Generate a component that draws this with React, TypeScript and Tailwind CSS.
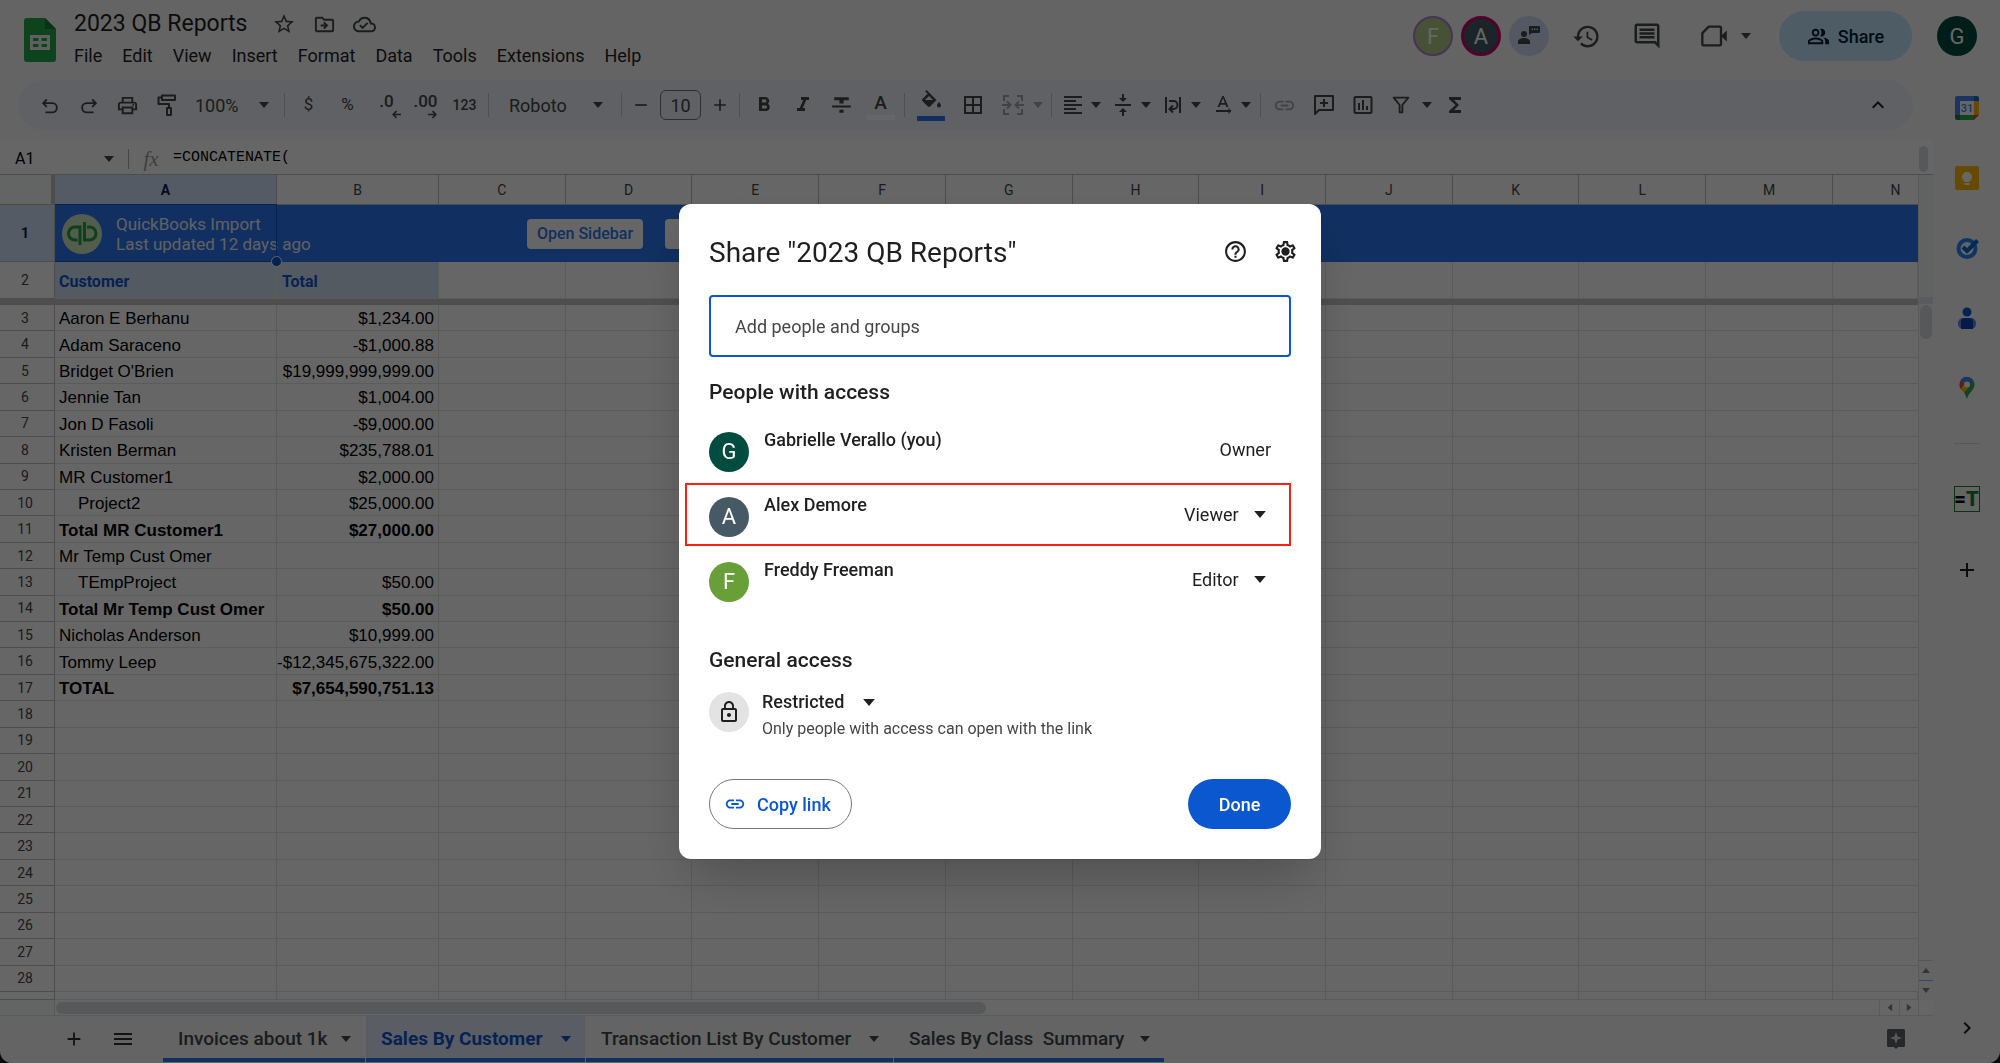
import React from "react";
import {
  MdOutlineStarBorder,
  MdOutlineDriveFileMove,
  MdOutlineCloudDone,
  MdOutlinePrint,
  MdFormatBold,
  MdFormatItalic,
  MdFormatStrikethrough,
  MdBorderAll,
  MdFormatAlignLeft,
  MdVerticalAlignCenter,
  MdTextRotationNone,
  MdInsertLink,
  MdInsertChartOutlined,
  MdFunctions,
  MdKeyboardArrowUp,
  MdKeyboardArrowRight,
  MdHistory,
  MdOutlineComment,
  MdOutlinePeopleAlt,
  MdHelpOutline,
  MdOutlineSettings,
  MdLockOutline,
  MdAdd,
  MdRemove,
  MdMenu,
} from "react-icons/md";

const menus = ["File", "Edit", "View", "Insert", "Format", "Data", "Tools", "Extensions", "Help"];
const letters = ["A", "B", "C", "D", "E", "F", "G", "H", "I", "J", "K", "L", "M", "N"];

type Row = { a: string; b: string; bold?: boolean; indent?: boolean };
const data: Row[] = [
  { a: "Aaron E Berhanu", b: "$1,234.00" },
  { a: "Adam Saraceno", b: "-$1,000.88" },
  { a: "Bridget O'Brien", b: "$19,999,999,999.00" },
  { a: "Jennie Tan", b: "$1,004.00" },
  { a: "Jon D Fasoli", b: "-$9,000.00" },
  { a: "Kristen Berman", b: "$235,788.01" },
  { a: "MR Customer1", b: "$2,000.00" },
  { a: "Project2", b: "$25,000.00", indent: true },
  { a: "Total MR Customer1", b: "$27,000.00", bold: true },
  { a: "Mr Temp Cust Omer", b: "" },
  { a: "TEmpProject", b: "$50.00", indent: true },
  { a: "Total Mr Temp Cust Omer", b: "$50.00", bold: true },
  { a: "Nicholas Anderson", b: "$10,999.00" },
  { a: "Tommy Leep", b: "-$12,345,675,322.00" },
  { a: "TOTAL", b: "$7,654,590,751.13", bold: true },
];
const bodyRows: Row[] = Array.from({ length: 26 }, (_, i) => data[i] ?? { a: "\u00a0", b: "" });

function Caret({ className = "", size = "h-[6px] w-[10px]" }: { className?: string; size?: string }) {
  return (
    <svg viewBox="0 0 10 6" className={"shrink-0 " + size + " " + className} fill="currentColor" aria-hidden="true">
      <path d="M0 0h10L5 6z" />
    </svg>
  );
}

function Stroke({ children, className = "size-6", width = 2 }: { children: React.ReactNode; className?: string; width?: number }) {
  return (
    <svg viewBox="0 0 24 24" className={className} fill="none" stroke="currentColor" strokeWidth={width} aria-hidden="true">
      {children}
    </svg>
  );
}

function Tool({ label, children, className = "w-[39px]" }: { label: string; children: React.ReactNode; className?: string }) {
  return (
    <button aria-label={label} className={"flex h-9 shrink-0 items-center justify-center " + className}>
      {children}
    </button>
  );
}

function Divider() {
  return <span className="mx-1 h-6 w-px shrink-0 bg-[#c7c7c7]" />;
}

function SheetsLogo() {
  return (
    <svg viewBox="0 0 32 44" className="h-11 w-8" aria-label="Sheets">
      <path d="M3 0h18l11 11v30a3 3 0 0 1-3 3H3a3 3 0 0 1-3-3V3a3 3 0 0 1 3-3z" fill="#22a94a" />
      <path d="M21 0l11 11H21z" fill="#13803a" />
      <path d="M6 17h20v15H6zM9 20v3h5.500v-3zM17.500 20v3H23v-3zM9 26v3h5.500v-3zM17.500 26v3H23v-3z" fill="#f1f1f1" fillRule="evenodd" />
    </svg>
  );
}

function Header() {
  return (
    <header className="flex h-20 shrink-0 justify-between pl-6 pr-[23px]">
      <div className="flex">
        <div className="pt-[18px]">
          <SheetsLogo />
        </div>
        <div className="pl-[18px] pt-2">
          <div className="flex h-8 items-center">
            <h1 className="whitespace-nowrap text-[23px] leading-8 text-[#1f1f1f]">2023 QB Reports</h1>
            <div className="flex gap-[17px] pl-[25px] text-[#444746]">
              <button aria-label="Star"><MdOutlineStarBorder className="size-6" /></button>
              <button aria-label="Move"><MdOutlineDriveFileMove className="size-[23px]" /></button>
              <button aria-label="Saved to Drive"><MdOutlineCloudDone className="size-[23px]" /></button>
            </div>
          </div>
          <nav className="flex h-[30px] items-center gap-5 text-[18px] text-[#1f1f1f]">
            {menus.map((m) => (
              <button key={m}>{m}</button>
            ))}
          </nav>
        </div>
      </div>
      <div className="flex h-[72px] items-center text-[#444746]">
        <span className="flex size-10 items-center justify-center rounded-full border-2 border-[#b77ee0] bg-[#aecb84] text-[22px] text-white">F</span>
        <span className="ml-2 flex size-10 items-center justify-center rounded-full border-3 border-[#d5006d] bg-[#455a64] text-[22px] text-white">A</span>
        <button aria-label="Show chat" className="ml-2 flex size-10 items-center justify-center rounded-full bg-[#d3dcf5]">
          <svg viewBox="0 0 24 24" className="size-6" fill="#444746" aria-hidden="true">
            <circle cx="7" cy="10" r="3" />
            <path d="M1 20v-2c0-3 3-4 6-4s6 1 6 4v2zM12 3a1 1 0 0 1 1-1h9a1 1 0 0 1 1 1v5a1 1 0 0 1-1 1h-7l-3 2z" />
            <path d="M14.500 4.500h1.500V6h-1.500zM17 4.500h1.500V6H17zM19.500 4.500H21V6h-1.500z" fill="#d3dcf5" />
          </svg>
        </button>
        <button aria-label="Version history" className="ml-[23px]"><MdHistory className="size-[29px]" /></button>
        <button aria-label="Comments" className="ml-[31px]"><MdOutlineComment className="size-[30px]" /></button>
        <button aria-label="Meet" className="ml-[38px] flex items-center gap-[13px]">
          <Stroke className="size-7" width={2}>
            <path d="M7.500 4H17a1 1 0 0 1 1 1v14a1 1 0 0 1-1 1H3a1 1 0 0 1-1-1V9.500z" strokeLinejoin="round" />
            <path d="M18 12l5-5v10z" fill="currentColor" stroke="none" />
          </Stroke>
          <Caret />
        </button>
        <button className="ml-7 flex h-[50px] w-[133px] items-center justify-center gap-2 rounded-full bg-[#c2e7ff] text-[18px] font-medium text-[#001d35]">
          <MdOutlinePeopleAlt className="size-[23px]" />
          Share
        </button>
        <span className="ml-[25px] flex size-10 items-center justify-center rounded-full bg-[#004d40] text-[22px] text-white">G</span>
      </div>
    </header>
  );
}

function Toolbar() {
  return (
    <div className="ml-[18px] mr-[20px] flex h-[50px] shrink-0 items-center rounded-full bg-[#edf2fa] pl-3 pr-4 text-[#444746]">
      <Tool label="Undo">
        <Stroke className="size-[22px]"><path d="M7 20h7.500a5 5 0 0 0 0-10H4.500M8.500 6l-4 4 4 4" /></Stroke>
      </Tool>
      <Tool label="Redo">
        <Stroke className="size-[22px]"><path d="M17 20H9.500a5 5 0 0 1 0-10h10M15.500 6l4 4-4 4" /></Stroke>
      </Tool>
      <Tool label="Print"><MdOutlinePrint className="size-[23px]" /></Tool>
      <Tool label="Paint format">
        <Stroke className="size-6"><path d="M7 2.500h13v4.500H7zM7 4.500H3.500V11H14v4M12 15h4v7h-4z" strokeLinejoin="round" /></Stroke>
      </Tool>
      <div className="relative flex h-9 w-[94px] shrink-0 items-center pl-[9px]">
        <select aria-label="Zoom" className="appearance-none bg-transparent pr-8 text-[18px]"><option>100%</option></select>
        <Caret className="pointer-events-none absolute right-[11px]" />
      </div>
      <Divider />
      <Tool label="Currency"><span className="text-[17px]">$</span></Tool>
      <Tool label="Percent"><span className="text-[17px]">%</span></Tool>
      <Tool label="Decrease decimals">
        <span className="relative pb-2 text-[17px] font-medium leading-5">.0
          <Stroke className="absolute -right-2 bottom-0 h-[9px] w-[11px]" width={4}><path d="M24 12H4M12 3l-9 9 9 9" /></Stroke>
        </span>
      </Tool>
      <Tool label="Increase decimals">
        <span className="relative pb-2 text-[17px] font-medium leading-5">.00
          <Stroke className="absolute right-0 bottom-0 h-[9px] w-[11px]" width={4}><path d="M0 12h20M12 3l9 9-9 9" /></Stroke>
        </span>
      </Tool>
      <Tool label="More formats"><span className="text-[14px] font-medium">123</span></Tool>
      <Divider />
      <div className="relative flex h-9 w-[124px] shrink-0 items-center pl-4">
        <select aria-label="Font" className="appearance-none bg-transparent pr-10 text-[18px]"><option>Roboto</option></select>
        <Caret className="pointer-events-none absolute right-[14px]" />
      </div>
      <Divider />
      <Tool label="Decrease font size" className="w-[30px]"><MdRemove className="size-5" /></Tool>
      <input aria-label="Font size" defaultValue="10" className="mx-1 h-[30px] w-[41px] shrink-0 rounded-md border border-[#747775] bg-transparent text-center text-[18px]" />
      <Tool label="Increase font size" className="w-[30px]"><MdAdd className="size-5" /></Tool>
      <Divider />
      <Tool label="Bold"><MdFormatBold className="size-6" /></Tool>
      <Tool label="Italic"><MdFormatItalic className="size-6" /></Tool>
      <Tool label="Strikethrough"><MdFormatStrikethrough className="size-[25px]" /></Tool>
      <Tool label="Text colour">
        <span className="flex flex-col items-center">
          <span className="text-[19px] font-medium leading-6">A</span>
          <span className="h-[5px] w-7 bg-white" />
        </span>
      </Tool>
      <Divider />
      <Tool label="Fill colour" className="w-11">
        <span className="flex flex-col items-center">
          <svg viewBox="0 0 24 22" className="h-[22px] w-6" fill="currentColor" aria-hidden="true">
            <path d="M17.500 10L9.600 2 7.600 0 6.200 1.400l2.400 2.400L3.400 9a1.500 1.500 0 0 0 0 2.100l5.500 5.500c.6.600 1.500.600 2.100 0l6.500-6.500zM6 10l4-4 4 4zM20 12s-2 2.200-2 3.500a2 2 0 0 0 4 0c0-1.300-2-3.500-2-3.500z" />
          </svg>
          <span className="mt-1 h-[5px] w-7 bg-[#2b76ef]" />
        </span>
      </Tool>
      <Tool label="Borders"><MdBorderAll className="size-6" /></Tool>
      <Tool label="Merge cells" className="w-[55px] gap-2 pl-1 text-[#a3a6a8]">
        <Stroke className="size-6"><path d="M3 8V3h5M16 3h5v5M3 16v5h5M16 21h5v-5M1 12h8M6 8.500L9.500 12 6 15.500M23 12h-8M18 8.500L14.500 12l3.500 3.500" /></Stroke>
        <Caret />
      </Tool>
      <Divider />
      <Tool label="Align" className="w-[50px] gap-[6px]"><MdFormatAlignLeft className="size-6" /><Caret /></Tool>
      <Tool label="Vertical align" className="w-[50px] gap-[6px]"><MdVerticalAlignCenter className="size-6" /><Caret /></Tool>
      <Tool label="Text wrap" className="w-[50px] gap-[6px]">
        <Stroke className="size-6"><path d="M5 4v16M19 4v16M8 8h4.500a3.500 3.500 0 0 1 0 8H9M12 12.500L8.500 16l3.500 3.500" /></Stroke>
        <Caret />
      </Tool>
      <Tool label="Text rotation" className="w-[50px] gap-[6px]"><MdTextRotationNone className="size-6" /><Caret /></Tool>
      <Divider />
      <Tool label="Insert link"><MdInsertLink className="size-[23px] text-[#a3a6a8]" /></Tool>
      <Tool label="Add comment">
        <Stroke className="size-6"><path d="M3 21V3h18v14H7zM12 6v8M8 10h8" strokeLinejoin="round" /></Stroke>
      </Tool>
      <Tool label="Insert chart"><MdInsertChartOutlined className="size-6" /></Tool>
      <Tool label="Filter" className="w-[53px] gap-[10px] pl-1">
        <Stroke className="size-[22px]"><path d="M4 4h16l-6.500 8v8h-3v-8z" strokeLinejoin="round" /></Stroke>
        <Caret />
      </Tool>
      <Tool label="Functions"><MdFunctions className="size-6" /></Tool>
      <Tool label="Hide the menus" className="ml-auto w-[39px]"><MdKeyboardArrowUp className="size-6 text-[#1f1f1f]" /></Tool>
    </div>
  );
}

function FormulaBar() {
  return (
    <div className="flex h-[35px] shrink-0 items-center border-b border-[#c0c0c0] bg-white pt-[3px]">
      <input aria-label="Name box" defaultValue="A1" className="w-[90px] bg-transparent pl-[15px] text-[16px] text-black" />
      <button aria-label="Named ranges" className="flex w-[38px] justify-center text-[#444746]"><Caret /></button>
      <span className="h-5 w-px bg-[#b0b0b0]" />
      <span className="w-[44px] text-center font-['Liberation_Serif'] text-[21px] leading-6 italic text-[#9aa0a6]">fx</span>
      <input aria-label="Formula" defaultValue="=CONCATENATE(" className="grow bg-transparent font-['Liberation_Mono'] text-[15px] text-black" />
      <span className="mr-[5px] h-[26px] w-[9px] rounded-full bg-[#dadce0]" />
    </div>
  );
}

const th = "border-b border-r border-[#c0c0c0] text-[14px] leading-4";
const td = "border-b border-r border-[#e2e3e3] p-0";

function Grid() {
  return (
    <table className="h-full w-full table-fixed border-separate border-spacing-0 bg-white">
      <colgroup>
        <col className="w-[55px]" />
        <col className="w-[222px]" />
        <col className="w-[162px]" />
        {letters.slice(2, 13).map((l) => (
          <col key={l} />
        ))}
        <col className="w-[85px]" />
      </colgroup>
      <thead>
        <tr className="h-[30px]">
          <th aria-label="Select all" className="border-b border-r-4 border-b-[#c0c0c0] border-r-[#c0c0c0] bg-[#f8f9fa] p-0" />
          {letters.map((l) => (
            <th
              key={l}
              scope="col"
              className={
                th +
                (l === "A" ? " bg-[#d3e3fd] p-0 font-bold text-[#041e49]" : l === "N" ? " overflow-hidden border-r-0 py-0 pl-10 pr-0 font-normal text-[#444746]" : " p-0 font-normal text-[#444746]")
              }
            >
              {l}
            </th>
          ))}
        </tr>
      </thead>
      <tbody>
        <tr className="h-[57px]">
          <th scope="row" className={th + " bg-[#d3e3fd] pr-1 font-bold text-[#041e49]"}>1</th>
          <td colSpan={14} className="relative bg-[#2b76ef] p-0">
            <div className="flex h-[56px] items-center text-[#f1f3f4]">
              <svg viewBox="0 0 40 40" className="ml-[7px] size-10 shrink-0" aria-label="QuickBooks">
                <circle cx="20" cy="20" r="20" fill="#cfe8c4" />
                <g fill="none" stroke="#22a045" strokeWidth="3">
                  <path d="M18 31V13h-5a6.500 6.500 0 0 0 0 13H15.500" />
                  <path d="M22.500 8v18h5a6.500 6.500 0 0 0 0-13H25" />
                </g>
              </svg>
              <div className="w-[410px] shrink-0 pl-[14px] text-[17px] leading-5">
                <div>QuickBooks Import</div>
                <div>Last updated 12 days ago</div>
              </div>
              <button className="ml-[15px] h-[30px] w-[116px] shrink-0 rounded bg-white text-[16px] font-medium text-[#2b76ef]">Open Sidebar</button>
              <button aria-label="Refresh" className="ml-[22px] h-[30px] w-[116px] shrink-0 rounded bg-white" />
            </div>
            <span className="absolute -top-px left-0 h-[58px] w-[222px] border-y border-r border-[#0b57d0]" />
            <span className="absolute -bottom-[5px] left-[216px] size-[11px] rounded-full border border-white bg-[#0b57d0]" />
          </td>
        </tr>
        <tr className="h-[37px] text-[16px] font-bold text-[#1155cc]">
          <th scope="row" className={th + " pr-1 font-normal text-[#444746]"}>2</th>
          <td className={td + " bg-[#cfe2f3] pl-1 pt-1"}>Customer</td>
          <td className={td + " bg-[#cfe2f3] pl-[5px] pt-1"}>Total</td>
          {letters.slice(2).map((l) => (
            <td key={l} className={td} />
          ))}
        </tr>
        <tr className="h-[6px]">
          <td colSpan={15} className="bg-[#c4c4c4] p-0" />
        </tr>
        {bodyRows.map((r, i) => (
          <tr key={i} className={"font-['Liberation_Sans'] text-[17px] leading-5 text-black " + (r.bold ? "font-bold" : "")}>
            <th scope="row" className={th + " py-0 pl-0 pr-1 font-['Roboto'] font-normal text-[#444746]"}>{i + 3}</th>
            <td className={td + " overflow-hidden whitespace-nowrap pt-[3px] " + (r.indent ? "pl-[23px]" : "pl-1")}>{r.a}</td>
            <td className={td + " whitespace-nowrap pr-1 pt-[3px] text-right"}>{r.b}</td>
            {letters.slice(2).map((l) => (
              <td key={l} className={td + (l === "N" ? " border-r-0" : "")} />
            ))}
          </tr>
        ))}
        <tr className="h-2">
          <th className={th + " p-0"} />
          {letters.map((l) => (
            <td key={l} className={td} />
          ))}
        </tr>
      </tbody>
    </table>
  );
}

const small = "h-[5px] w-2";

function VerticalScroll() {
  return (
    <div className="flex w-[15px] shrink-0 flex-col items-center border-l border-[#e2e3e3] bg-[#fbfbfb] text-[#80868b]">
      <div className="h-[123px] w-full border-b border-[#e2e3e3] bg-[#f3f4f5]" />
      <div className="h-[6px] w-full bg-[#dfe3ee]" />
      <div className="mt-px h-[34px] w-3 rounded-full bg-[#dadce0]" />
      <button aria-label="Scroll up" className="mt-auto flex h-5 w-full items-center justify-center border-t border-[#dadce0]"><Caret size={small} className="rotate-180" /></button>
      <button aria-label="Scroll down" className="flex h-5 w-full items-center justify-center border-t border-[#8ab0f5]"><Caret size={small} /></button>
    </div>
  );
}

function HorizontalScroll() {
  return (
    <div className="flex h-4 shrink-0 items-center border-b border-[#e2e3e3] bg-white text-[#80868b]">
      <div className="flex h-full w-[55px] shrink-0 border-r border-[#dadce0] bg-[#f8f9fa]" />
      <div className="flex grow items-center pl-px">
        <div className="h-3 w-[51%] rounded-full bg-[#dadce0]" />
      </div>
      <button aria-label="Scroll left" className="flex h-full w-5 items-center justify-center border-l border-[#e2e3e3]"><Caret size={small} className="rotate-90" /></button>
      <button aria-label="Scroll right" className="flex h-full w-5 items-center justify-center border-x border-[#e2e3e3]"><Caret size={small} className="-rotate-90" /></button>
      <span className="w-[14px]" />
    </div>
  );
}

const tabs = [
  { name: "Invoices about 1k", width: "w-[202px]" },
  { name: "Sales By Customer", width: "w-[219px]", active: true },
  { name: "Transaction List By Customer", width: "w-[307px]" },
  { name: "Sales By Class  Summary", width: "w-[270px]" },
];

function BottomBar() {
  return (
    <footer className="flex h-[46px] shrink-0 items-stretch pl-[54px] pr-7 text-[#444746]">
      <button aria-label="Add sheet" className="flex w-[39px] items-center justify-center"><MdAdd className="size-[22px] text-[#303030]" /></button>
      <button aria-label="All sheets" className="ml-[10px] flex w-[39px] items-center justify-center"><MdMenu className="size-6 text-[#303030]" /></button>
      <div className="ml-[21px] flex gap-px">
        {tabs.map((t) => (
          <button
            key={t.name}
            className={
              "flex shrink-0 items-center justify-between whitespace-pre border-b-4 border-[#2b76ef] pl-[15px] pr-[14px] pt-1 text-[19px] " +
              t.width +
              (t.active ? " bg-[#e1e9f7] font-bold text-[#0b57d0]" : " font-medium text-[#444746]")
            }
          >
            {t.name}
            <Caret />
          </button>
        ))}
      </div>
      <button aria-label="Explore" className="ml-auto">
        <svg viewBox="0 0 18 20" className="h-5 w-[18px]" aria-hidden="true">
          <path d="M1.500 0h15A1.500 1.500 0 0 1 18 1.500v15a1.500 1.500 0 0 1-1.500 1.500H11l-2 2-2-2H1.500A1.500 1.500 0 0 1 0 16.500v-15A1.500 1.500 0 0 1 1.500 0z" fill="#5f6368" />
          <path d="M9 3l1.500 4.500L15 9l-4.500 1.500L9 15l-1.500-4.500L3 9l4.500-1.500z" fill="#dfe1e5" />
        </svg>
      </button>
    </footer>
  );
}

function SidePanel() {
  return (
    <aside className="flex w-[67px] shrink-0 flex-col items-center pt-4 text-[#1f1f1f]">
      <div className="flex flex-col items-center gap-[46px]">
        <button aria-label="Calendar">
          <svg viewBox="0 0 24 24" className="size-6">
            <path d="M2 0h17v5H5v14H0V2a2 2 0 0 1 2-2z" fill="#4285f4" />
            <path d="M19 0h3a2 2 0 0 1 2 2v3h-5z" fill="#1967d2" />
            <path d="M19 5h5v14h-5z" fill="#fbbc04" />
            <path d="M5 19h14v5H5z" fill="#34a853" />
            <path d="M0 19h5v5H2a2 2 0 0 1-2-2z" fill="#188038" />
            <path d="M19 19h5l-5 5z" fill="#ea4335" />
            <path d="M5 5h14v14H5z" fill="#fff" />
            <text x="12" y="16" textAnchor="middle" fontSize="11" fontWeight="500" fontFamily="Roboto" fill="#4285f4">31</text>
          </svg>
        </button>
        <button aria-label="Keep">
          <svg viewBox="0 0 24 24" className="size-6">
            <rect width="24" height="24" rx="2" fill="#fbbc04" />
            <circle cx="12" cy="11" r="5" fill="#fff" />
            <path d="M9.500 13h5v3h-5zM9.500 17h5v2h-5z" fill="#fff" />
          </svg>
        </button>
        <button aria-label="Tasks">
          <svg viewBox="0 0 24 24" className="size-6" fill="none">
            <circle cx="12" cy="12.500" r="8.500" stroke="#2684fc" strokeWidth="4" />
            <path d="M8 11l4 4L22.500 4.500" stroke="#0066da" strokeWidth="4" />
          </svg>
        </button>
        <button aria-label="Contacts">
          <svg viewBox="0 0 24 24" className="size-6">
            <circle cx="12" cy="6" r="4.500" fill="#0b57d0" />
            <rect x="3" y="12" width="18" height="11" rx="5" fill="#5e8bea" />
            <path d="M6 23v-7a4 4 0 0 1 4-4h4a4 4 0 0 1 4 4v7z" fill="#0b45b8" />
          </svg>
        </button>
        <button aria-label="Maps">
          <svg viewBox="0 0 24 24" className="size-6">
            <path d="M12 1a7.500 7.500 0 0 1 7.500 7.500c0 5.500-6 8-7.500 14.500L9 16z" fill="#34a853" />
            <path d="M5.500 4.500A7.500 7.500 0 0 1 14.500 1.500L12 8.500z" fill="#4285f4" />
            <path d="M14.500 1.500A7.500 7.500 0 0 1 18.500 5L12 9z" fill="#4285f4" />
            <path d="M5.800 4.300L10 8l-4.500 5C4 10 4 7 5.800 4.300z" fill="#ea4335" />
            <path d="M5.500 13L12 6l3 4-6 6.500z" fill="#fbbc04" />
            <circle cx="12" cy="8.500" r="3" fill="#fff" />
          </svg>
        </button>
      </div>
      <span className="mt-[43px] h-px w-[25px] bg-[#dadce0]" />
      <button aria-label="Template add-on" className="mt-[42px] flex h-[26px] w-[26px] items-center justify-center border border-[#188038] bg-[#f9fbfd] text-[20px] font-black leading-5 text-black">
        <span>=</span>
        <span className="text-[#188038]">T</span>
      </button>
      <button aria-label="Get add-ons" className="mt-[46px]"><MdAdd className="size-6" /></button>
      <button aria-label="Hide side panel" className="mb-[22px] mt-auto"><MdKeyboardArrowRight className="size-6" /></button>
    </aside>
  );
}

const people = [
  { initial: "G", name: "Gabrielle Verallo (you)", color: "bg-[#004d40]", role: "Owner" },
  { initial: "A", name: "Alex Demore", color: "bg-[#455a64]", role: "Viewer", marked: true },
  { initial: "F", name: "Freddy Freeman", color: "bg-[#689f38]", role: "Editor" },
];

const large = "h-[7px] w-3";

function ShareDialog() {
  return (
    <div role="dialog" aria-modal="true" aria-labelledby="share-title" className="w-[642px] rounded-xl bg-white px-[30px] pb-[30px] pt-[30px] text-[#1f1f1f] shadow-2xl">
      <div className="flex h-[34px] items-center justify-between">
        <h2 id="share-title" className="pt-1 text-[28px] leading-[34px]">Share "2023 QB Reports"</h2>
        <div className="-mr-[7px] flex gap-[25px]">
          <button aria-label="Help"><MdHelpOutline className="size-[25px]" /></button>
          <button aria-label="Settings">
            <svg viewBox="0 0 24 24" className="size-[25px]">
              <MdOutlineSettings size={24} />
              <circle cx="12" cy="12" r="3" fill="currentColor" />
            </svg>
          </button>
        </div>
      </div>
      <input
        aria-label="Add people and groups"
        placeholder="Add people and groups"
        className="mt-[27px] h-[62px] w-full rounded border-2 border-[#0b57d0] px-6 text-[18px] placeholder:text-[#444746] outline-none"
      />
      <h3 className="mt-[23px] text-[21px] font-medium leading-6">People with access</h3>
      <ul className="-ml-6 mt-[13px]">
        {people.map((p) => (
          <li key={p.name} className="flex h-[65px] items-center">
            <div className={"flex h-[63px] w-full items-center border-2 pl-[22px] " + (p.marked ? "border-[#fb2010]" : "border-transparent")}>
              <span className={"mt-1 flex size-10 shrink-0 items-center justify-center rounded-full text-[22px] text-white " + p.color}>{p.initial}</span>
              <span className="grow self-start pl-[15px] pt-2 text-[18px] font-medium leading-6">{p.name}</span>
              {p.role === "Owner" ? (
                <span className="pr-[18px] text-[18px]">{p.role}</span>
              ) : (
                <div className="relative flex items-center pr-[22px]">
                  <select aria-label={"Role of " + p.name} className="appearance-none bg-transparent pr-7 text-[18px]"><option>{p.role}</option></select>
                  <Caret size={large} className="pointer-events-none absolute right-[23px]" />
                </div>
              )}
            </div>
          </li>
        ))}
      </ul>
      <h3 className="mt-[36px] text-[21px] font-medium leading-6">General access</h3>
      <div className="mt-[18px] flex">
        <span className="mt-[2px] flex size-10 items-center justify-center rounded-full bg-[#e3e3e3]"><MdLockOutline className="size-6" /></span>
        <div className="pl-[13px]">
          <div className="relative inline-flex h-6 items-center">
            <select aria-label="General access" className="appearance-none bg-transparent pr-[30px] text-[18px] font-medium leading-6"><option>Restricted</option></select>
            <Caret size={large} className="pointer-events-none absolute right-0" />
          </div>
          <p className="mt-1 text-[16px] leading-5 text-[#444746]">Only people with access can open with the link</p>
        </div>
      </div>
      <div className="mt-10 flex justify-between">
        <button className="flex h-[50px] w-[143px] items-center gap-[11px] rounded-full border border-[#747775] pl-[14px] text-[18px] font-medium text-[#0b57d0]">
          <MdInsertLink className="size-[22px]" />
          Copy link
        </button>
        <button className="h-[50px] w-[103px] rounded-full bg-[#0b57d0] text-[18px] font-medium text-white">Done</button>
      </div>
    </div>
  );
}

export default function App() {
  return (
    <div className="relative h-screen overflow-hidden bg-[#201820] font-['Roboto',sans-serif]">
      <div className="flex h-full flex-col overflow-hidden rounded-b-xl border-b border-[#ffffff] bg-[#f9fbfd]">
        <Header />
        <div className="flex min-h-0 grow">
          <div className="flex min-w-0 grow flex-col">
            <Toolbar />
            <div className="mt-[10px] flex min-h-0 grow flex-col">
              <FormulaBar />
              <div className="flex min-h-0 grow">
                <div className="min-w-0 grow overflow-hidden">
                  <Grid />
                </div>
                <VerticalScroll />
              </div>
              <HorizontalScroll />
            </div>
            <BottomBar />
          </div>
          <SidePanel />
        </div>
      </div>
      <div className="fixed inset-0 flex items-center justify-center bg-black/60">
        <ShareDialog />
      </div>
    </div>
  );
}
